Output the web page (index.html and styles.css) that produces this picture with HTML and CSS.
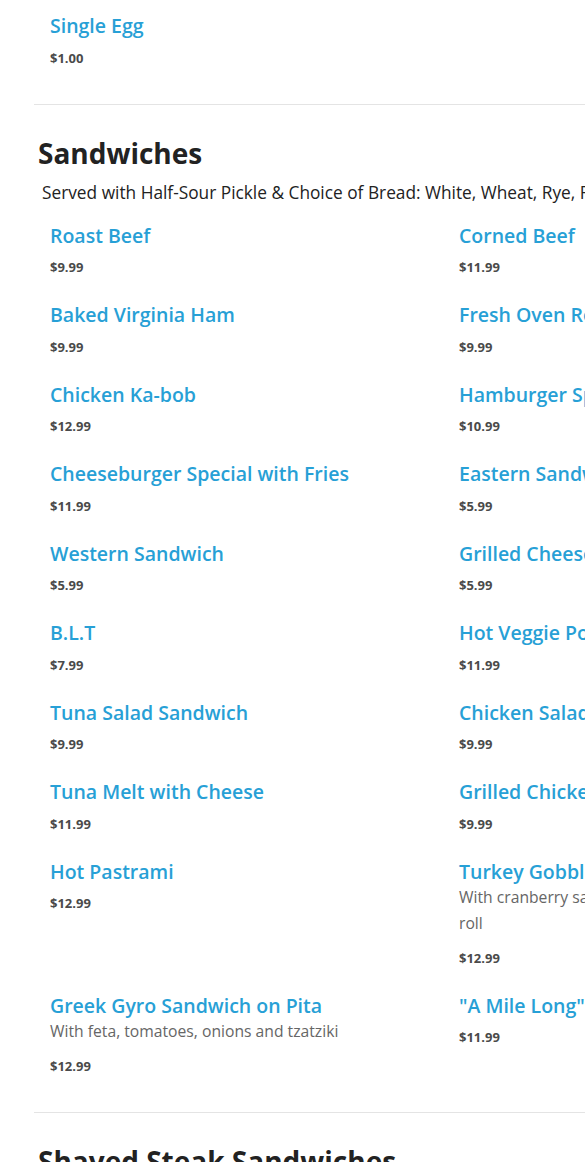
FILE: index.html
```html
<!DOCTYPE html>
<html lang="en">
<head>
<meta charset="utf-8">
<title>Menu</title>
<link rel="stylesheet" href="styles.css">
</head>
<body>
<div class="menu">
  <section class="section section-first">
    <div class="items">
      <div class="item">
        <h3 class="item-name">Single Egg</h3>
        <div class="item-price">$1.00</div>
      </div>
    </div>
  </section>

  <section class="section">
    <h2 class="section-title">Sandwiches</h2>
    <p class="section-desc">Served with Half-Sour Pickle &amp; Choice of Bread: White, Wheat, Rye, Roll or Wrap</p>
    <div class="items">
      <div class="item"><h3 class="item-name">Roast Beef</h3><div class="item-price">$9.99</div></div>
      <div class="item"><h3 class="item-name">Corned Beef</h3><div class="item-price">$11.99</div></div>
      <div class="item"><h3 class="item-name">Baked Virginia Ham</h3><div class="item-price">$9.99</div></div>
      <div class="item"><h3 class="item-name">Fresh Oven Roasted Turkey</h3><div class="item-price">$9.99</div></div>
      <div class="item"><h3 class="item-name">Chicken Ka-bob</h3><div class="item-price">$12.99</div></div>
      <div class="item"><h3 class="item-name">Hamburger Special with Fries</h3><div class="item-price">$10.99</div></div>
      <div class="item"><h3 class="item-name">Cheeseburger Special with Fries</h3><div class="item-price">$11.99</div></div>
      <div class="item"><h3 class="item-name">Eastern Sandwich</h3><div class="item-price">$5.99</div></div>
      <div class="item"><h3 class="item-name">Western Sandwich</h3><div class="item-price">$5.99</div></div>
      <div class="item"><h3 class="item-name">Grilled Cheese</h3><div class="item-price">$5.99</div></div>
      <div class="item"><h3 class="item-name">B.L.T</h3><div class="item-price">$7.99</div></div>
      <div class="item"><h3 class="item-name">Hot Veggie Pocket</h3><div class="item-price">$11.99</div></div>
      <div class="item"><h3 class="item-name">Tuna Salad Sandwich</h3><div class="item-price">$9.99</div></div>
      <div class="item"><h3 class="item-name">Chicken Salad Sandwich</h3><div class="item-price">$9.99</div></div>
      <div class="item"><h3 class="item-name">Tuna Melt with Cheese</h3><div class="item-price">$11.99</div></div>
      <div class="item"><h3 class="item-name">Grilled Chicken Sandwich</h3><div class="item-price">$9.99</div></div>
      <div class="item"><h3 class="item-name">Hot Pastrami</h3><div class="item-price">$12.99</div></div>
      <div class="item"><h3 class="item-name">Turkey Gobbler</h3><p class="item-desc">With cranberry sauce, stuffing and mayo on a kaiser roll</p><div class="item-price">$12.99</div></div>
      <div class="item"><h3 class="item-name">Greek Gyro Sandwich on Pita</h3><p class="item-desc">With feta, tomatoes, onions and tzatziki</p><div class="item-price">$12.99</div></div>
      <div class="item"><h3 class="item-name">"A Mile Long" Hot Dog</h3><div class="item-price">$11.99</div></div>
    </div>
  </section>

  <section class="section">
    <h2 class="section-title">Shaved Steak Sandwiches</h2>
  </section>
</div>
</body>
</html>
```

FILE: styles.css
```css
html, body {
  margin: 0;
  padding: 0;
  overflow-x: hidden;
  background: #ffffff;
}

body {
  font-family: "Open Sans", "Liberation Sans", sans-serif;
  color: #222222;
}

.menu {
  width: 818px;
  padding-left: 34px;
}

.section {
  border-top: 1px solid #e4e4e4;
  padding: 29px 0 10px;
}

.section-first {
  border-top: none;
  padding-top: 14px;
}

.section-title {
  margin: 0;
  padding-left: 4px;
  font-size: 28px;
  line-height: 38px;
  font-weight: 700;
  color: #222222;
}

.section-desc {
  margin: 10px 0 0;
  padding-left: 8px;
  font-size: 17.3px;
  line-height: 22px;
  color: #222222;
  white-space: nowrap;
}

.items {
  display: grid;
  grid-template-columns: 409px 409px;
  padding-left: 16px;
  margin-top: 20px;
}

.section-first .items {
  margin-top: 0;
}

.item {
  padding: 0 30px 26px 0;
}

.item-name {
  margin: 0;
  font-size: 19.5px;
  line-height: 23px;
  font-weight: 600;
  color: #27a0d6;
  white-space: nowrap;
}

.item-desc {
  margin: 1.5px 0 0;
  font-size: 15.7px;
  line-height: 26px;
  color: #666666;
}

.item-price {
  margin-top: 10.5px;
  font-size: 13px;
  line-height: 20px;
  font-weight: 700;
  color: #4a4a4a;
}

.item-desc + .item-price {
  margin-top: 11.5px;
}
```
